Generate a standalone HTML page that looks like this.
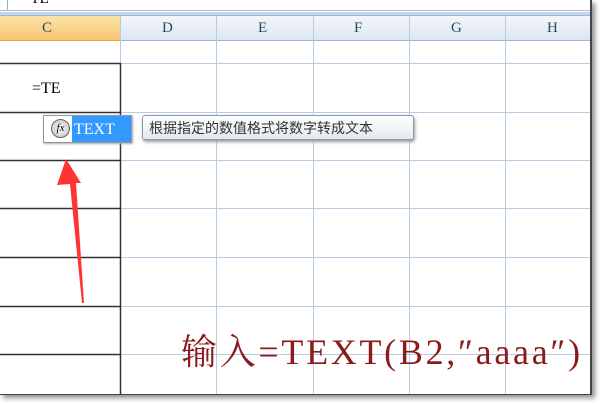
<!DOCTYPE html><html><head><style>
body{margin:0;width:600px;height:404px;overflow:hidden;background:#fff;position:relative;font-family:"Liberation Serif","Noto Serif CJK SC",serif}
.a{position:absolute}
</style></head><body>
<div class="a" style="left:0;top:0;width:590px;height:394px;background:#fff;box-shadow:3px 3px 5px rgba(0,0,0,.45);border-right:2px solid #444;border-bottom:1px solid #444;overflow:hidden">
 <div class="a" style="left:0;top:0;width:590px;height:10px;background:#fff;border-bottom:1px solid #a9bdd6"></div>
 <div class="a" style="left:7px;top:0;width:1px;height:10px;background:#9ab"></div>
 <div class="a" style="left:22px;top:-9px;font-size:15px">=TE</div>
 <div class="a" style="left:0;top:12px;width:590px;height:3px;background:#c5d5ea;border-bottom:1px solid #9fb6d4"></div>
 <div class="a" style="left:0;top:16px;width:590px;height:24px;background:linear-gradient(#f3f6fb,#dde6f2);border-bottom:1px solid #9fb6d4"></div>
 <div class="a" style="left:0;top:16px;width:120px;height:24px;background:linear-gradient(#fbe3a8,#f6c770);border-bottom:1px solid #e8a040"></div>
 <div class="a" style="left:0;top:16px;width:590px;height:24px;font-size:15px;color:#2a4a5a;line-height:24px">
  <span class="a" style="left:42px">C</span><span class="a" style="left:162px">D</span><span class="a" style="left:258px">E</span><span class="a" style="left:354px">F</span><span class="a" style="left:451px">G</span><span class="a" style="left:547px">H</span>
 </div>
 <svg class="a" style="left:0;top:16px" width="590" height="378">
  <g stroke="#b8cbe4" stroke-width="1">
   <path d="M120.5 0V378M216.5 0V378M313.5 0V378M409.5 0V378M505.5 0V378"/>
   <path d="M0 47.5H590M0 96.5H590M0 144.5H590M0 192.5H590M0 241.5H590M0 290.5H590M0 338.5H590"/>
  </g>
  <g stroke="#333" stroke-width="1.5">
   <path d="M120.5 47V378M0 47.5H121M0 96.5H121M0 144.5H121M0 192.5H121M0 241.5H121M0 290.5H121M0 338.5H121"/>
  </g>
 </svg>
 <div class="a" style="left:32px;top:80px;font-size:16px">=TE</div>
 <div class="a" style="left:43px;top:115px;width:87px;height:26px;border:1px solid #8a9aaa;background:#fff;box-shadow:1px 1px 2px #aaa"></div>
 <div class="a" style="left:72px;top:116px;width:59px;height:26px;background:#3399ff;color:#fff;font-size:16px;line-height:27px;padding-left:2px;box-sizing:border-box">TEXT</div>
 <div class="a" style="left:51px;top:119px;width:17px;height:17px;border-radius:50%;background:radial-gradient(#fff,#bbb);border:1px solid #666;font-size:11px;font-style:italic;text-align:center;line-height:17px">fx</div>
 <div class="a" style="left:142px;top:115px;width:272px;height:25px;border:1px solid #8a9aaa;border-radius:3px;background:linear-gradient(#fff,#e4e9f0);box-shadow:1px 2px 3px #999;font-family:'Liberation Sans','Noto Sans CJK SC',sans-serif;font-size:14px;line-height:25px;color:#333;padding-left:6px;box-sizing:border-box">根据指定的数值格式将数字转成文本</div>
 <svg class="a" style="left:0;top:0" width="200" height="320"><path d="M66 159L81 183L76 183L84 303L82 303L70 184L57 185Z" fill="#ff3333"/></svg>
 <div class="a" style="left:181px;top:324px;font-size:36px;color:#8b1a1a;white-space:nowrap;letter-spacing:2.7px">输入=TEXT(B2,″aaaa″)</div>
</div>
</body></html>
